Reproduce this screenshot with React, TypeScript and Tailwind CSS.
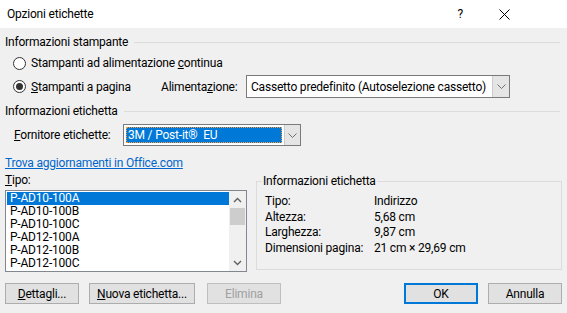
import React from "react";

const font = { fontFamily: 'Roboto, "Noto Sans", sans-serif', letterSpacing: "-0.2px" };

function Radio({ checked }: { checked?: boolean }) {
  return (
    <span className="relative inline-flex w-[13px] h-[13px] rounded-full border border-[#333333] bg-white items-center justify-center shrink-0">
      {checked && <span className="w-[7px] h-[7px] rounded-full bg-[#333333]" />}
    </span>
  );
}

function Chevron({ up, color = "#606060" }: { up?: boolean; color?: string }) {
  return (
    <svg width="9" height="6" viewBox="0 0 9 6">
      <path d={up ? "M1 5 L4.5 1.5 L8 5" : "M1 1 L4.5 4.5 L8 1"} fill="none" stroke={color} strokeWidth="1.4" />
    </svg>
  );
}

function SelChevron() {
  return (
    <svg width="9" height="5" viewBox="0 0 9 5">
      <path d="M0.5 0.5 L4.5 4.5 L8.5 0.5" fill="none" stroke="#707070" strokeWidth="1" />
    </svg>
  );
}

function Btn({ children, w, primary, disabled }: { children: React.ReactNode; w: string; primary?: boolean; disabled?: boolean }) {
  return (
    <div
      className={`${w} h-[21px] flex items-center justify-center bg-[#e1e1e1] whitespace-nowrap ${
        primary ? "border-2 border-[#0078d7]" : disabled ? "border border-[#bfbfbf] text-[#a0a0a0]" : "border border-[#adadad]"
      }`}
    >
      {children}
    </div>
  );
}

const items = ["P-AD10-100A", "P-AD10-100B", "P-AD10-100C", "P-AD12-100A", "P-AD12-100B", "P-AD12-100C"];

export default function App() {
  return (
    <div className="w-[567px] h-[313px] bg-[#f0f0f0] text-[12px] leading-[16px] text-black overflow-hidden" style={font}>
      {/* Title bar */}
      <div className="h-[28px] bg-white flex items-center pl-[7px]">
        <span className="text-[12px]">Opzioni etichette</span>
        <span className="ml-auto mr-[36px] text-[12px]">?</span>
        <svg width="11" height="11" viewBox="0 0 11 11" style={{ marginRight: 57 }}>
          <path d="M0.5 0.5 L10.5 10.5 M10.5 0.5 L0.5 10.5" stroke="#000" strokeWidth="1" />
        </svg>
      </div>

      <div className="px-[5px]">
        {/* Informazioni stampante */}
        <div className="mt-[6px] flex items-center gap-[6px]">
          <span className="whitespace-nowrap">Informazioni stampante</span>
          <div className="flex-1 h-px bg-[#dcdcdc] mr-[2px]" />
        </div>
        <div className="mt-[5px] pl-[8px] flex items-center gap-[5px] h-[16px]">
          <Radio />
          <span className="whitespace-nowrap">
            Stampanti ad alimentazione <u>c</u>ontinua
          </span>
        </div>
        <div className="mt-[4px] pl-[8px] flex items-center h-[23px]">
          <Radio checked />
          <span className="ml-[5px] w-[130px] whitespace-nowrap">
            <u>S</u>tampanti a pagina
          </span>
          <span className="w-[85px] whitespace-nowrap">
            Alimenta<u>z</u>ione:
          </span>
          <div className="w-[264px] h-[23px] border border-[#7a7a7a] bg-white flex items-center">
            <span className="pl-[4px] flex-1 whitespace-nowrap overflow-hidden">Cassetto predefinito (Autoselezione cassetto)</span>
            <div className="w-[17px] h-full bg-[#e5e5e5] border-l border-[#cccccc] flex items-center justify-center shrink-0">
              <SelChevron />
            </div>
          </div>
        </div>

        {/* Informazioni etichetta */}
        <div className="mt-[5px] flex items-center gap-[6px]">
          <span className="whitespace-nowrap">Informazioni etichetta</span>
          <div className="flex-1 h-px bg-[#dcdcdc] mr-[2px]" />
        </div>
        <div className="mt-[5px] pl-[9px] flex items-center h-[22px]">
          <span className="w-[109px] whitespace-nowrap">
            <u>F</u>ornitore etichette:
          </span>
          <div className="w-[178px] h-[22px] border border-[#7a7a7a] bg-white flex items-center">
            <div className="flex-1 h-full p-[2px]">
              <div className="h-full bg-[#0078d7] text-white border border-dotted border-[#ff9a2e] flex items-center pl-[1px] whitespace-nowrap">
                3M / Post-it®&nbsp;&nbsp;EU
              </div>
            </div>
            <div className="w-[16px] h-full bg-[#e5e5e5] border-l border-[#cccccc] flex items-center justify-center shrink-0">
              <SelChevron />
            </div>
          </div>
        </div>
        <div className="mt-[9px] text-[#0066cc] underline whitespace-nowrap">Trova aggiornamenti in Office.com</div>

        <div className="mt-[1px] flex">
          <div className="w-[242px]">
            <div>
              <u>T</u>ipo:
            </div>
            <div className="mt-[2px] h-[82px] border border-[#828790] bg-white flex">
              <div className="flex-1 pt-[1px] pl-[1px]">
                {items.map((it, i) => (
                  <div key={it} className={`h-[13px] leading-[13px] pl-[3px] ${i === 0 ? "bg-[#0078d7] text-white" : ""}`}>
                    {it}
                  </div>
                ))}
              </div>
              <div className="w-[17px] bg-[#f0f0f0] flex flex-col items-center">
                <div className="h-[17px] flex items-center justify-center">
                  <Chevron up />
                </div>
                <div className="w-[15px] h-[17px] bg-[#cdcdcd]" />
                <div className="flex-1" />
                <div className="h-[17px] flex items-center justify-center">
                  <Chevron />
                </div>
              </div>
            </div>
          </div>
          <div className="ml-[9px] mt-[9px] w-[306px] h-[89px] border border-[#dcdcdc] relative">
            <span className="absolute left-[5px] top-[-9px] bg-[#f0f0f0] px-px whitespace-nowrap">Informazioni etichetta</span>
            <div className="mt-[12px] pl-[8px] grid grid-cols-[109px_1fr] leading-[15.7px] whitespace-nowrap">
              <span>Tipo:</span>
              <span>Indirizzo</span>
              <span>Altezza:</span>
              <span>5,68 cm</span>
              <span>Larghezza:</span>
              <span>9,87 cm</span>
              <span>Dimensioni pagina:</span>
              <span>21 cm × 29,69 cm</span>
            </div>
          </div>
        </div>

        <div className="mt-[11px] flex items-center">
          <Btn w="w-[74px]">
            <span>
              <u>D</u>ettagli...
            </span>
          </Btn>
          <div className="ml-[10px]">
            <Btn w="w-[106px]">
              <span>
                <u>N</u>uova etichetta...
              </span>
            </Btn>
          </div>
          <div className="ml-[12px]">
            <Btn w="w-[74px]" disabled>
              Elimina
            </Btn>
          </div>
          <div className="ml-auto">
            <Btn w="w-[74px]" primary>
              OK
            </Btn>
          </div>
          <div className="ml-[10px]">
            <Btn w="w-[74px]">Annulla</Btn>
          </div>
        </div>
      </div>
    </div>
  );
}
